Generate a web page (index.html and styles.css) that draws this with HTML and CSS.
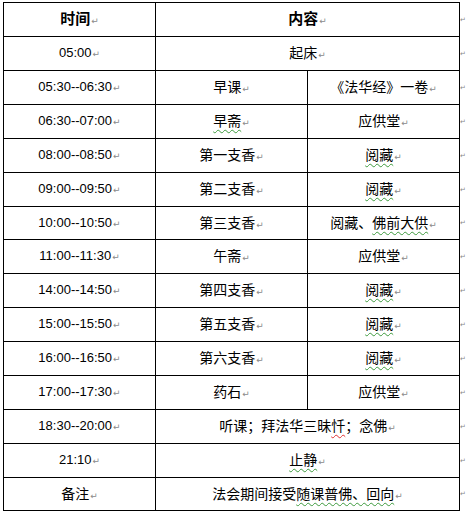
FILE: index.html
```html
<!DOCTYPE html>
<html lang="zh-CN">
<head>
<meta charset="utf-8">
<title>日程</title>
<link rel="stylesheet" href="styles.css">
</head>
<body>
<div class="page">
<table class="sched">
  <colgroup><col class="c1"><col class="c2"><col class="c3"><col class="ce"></colgroup>
  <tr><td class="hd">时间<span class="pm">↵</span></td><td class="hd" colspan="2">内容<span class="pm">↵</span></td><td class="eol">↵</td></tr>
  <tr><td class="t">05:00<span class="pm">↵</span></td><td colspan="2">起床<span class="pm">↵</span></td><td class="eol">↵</td></tr>
  <tr><td class="t">05:30--06:30<span class="pm">↵</span></td><td>早课<span class="pm">↵</span></td><td>《法华经》一卷<span class="pm">↵</span></td><td class="eol">↵</td></tr>
  <tr><td class="t">06:30--07:00<span class="pm">↵</span></td><td><span class="wg">早斋</span><span class="pm">↵</span></td><td>应供堂<span class="pm">↵</span></td><td class="eol">↵</td></tr>
  <tr><td class="t">08:00--08:50<span class="pm">↵</span></td><td>第一支香<span class="pm">↵</span></td><td><span class="wg">阅藏</span><span class="pm">↵</span></td><td class="eol">↵</td></tr>
  <tr><td class="t">09:00--09:50<span class="pm">↵</span></td><td>第二支香<span class="pm">↵</span></td><td><span class="wg">阅藏</span><span class="pm">↵</span></td><td class="eol">↵</td></tr>
  <tr class="short"><td class="t">10:00--10:50<span class="pm">↵</span></td><td>第三支香<span class="pm">↵</span></td><td>阅藏、<span class="wg">佛前大供</span><span class="pm">↵</span></td><td class="eol">↵</td></tr>
  <tr><td class="t">11:00--11:30<span class="pm">↵</span></td><td>午斋<span class="pm">↵</span></td><td>应供堂<span class="pm">↵</span></td><td class="eol">↵</td></tr>
  <tr><td class="t">14:00--14:50<span class="pm">↵</span></td><td>第四支香<span class="pm">↵</span></td><td><span class="wg">阅藏</span><span class="pm">↵</span></td><td class="eol">↵</td></tr>
  <tr><td class="t">15:00--15:50<span class="pm">↵</span></td><td>第五支香<span class="pm">↵</span></td><td><span class="wg">阅藏</span><span class="pm">↵</span></td><td class="eol">↵</td></tr>
  <tr><td class="t">16:00--16:50<span class="pm">↵</span></td><td>第六支香<span class="pm">↵</span></td><td><span class="wg">阅藏</span><span class="pm">↵</span></td><td class="eol">↵</td></tr>
  <tr><td class="t">17:00--17:30<span class="pm">↵</span></td><td>药石<span class="pm">↵</span></td><td>应供堂<span class="pm">↵</span></td><td class="eol">↵</td></tr>
  <tr><td class="t">18:30--20:00<span class="pm">↵</span></td><td colspan="2">听课；拜法华三昧<span class="wr">忏</span>；念佛<span class="pm">↵</span></td><td class="eol">↵</td></tr>
  <tr><td class="t">21:10<span class="pm">↵</span></td><td colspan="2"><span class="wg">止静</span><span class="pm">↵</span></td><td class="eol">↵</td></tr>
  <tr class="short"><td>备注<span class="pm">↵</span></td><td colspan="2">法会期间接受<span class="wg">随课普佛、回向</span><span class="pm">↵</span></td><td class="eol">↵</td></tr>
</table>
</div>
</body>
</html>
```

FILE: styles.css
```css
html, body {
  margin: 0;
  padding: 0;
  background: #ffffff;
}
.page {
  padding: 2px 0 0 3px;
}
.sched {
  border-collapse: collapse;
  table-layout: fixed;
  width: 462px;
  font-family: "Noto Sans CJK SC", sans-serif;
  font-size: 14px;
  color: #000;
}
.c1, .c2, .c3 { width: 152px; }
.ce { width: 6px; }
.sched tr { height: 34px; }
.sched tr.short { height: 33px; }
.sched td {
  border: 1px solid #000;
  text-align: center;
  vertical-align: middle;
  padding: 0;
  line-height: 16px;
  white-space: nowrap;
}
.sched td.eol {
  border: none;
  text-align: left;
  padding: 0;
  color: #8a8a8a;
  font-family: "DejaVu Sans", sans-serif;
  font-size: 7px;
}
.hd { font-weight: bold; font-size: 15px; }
.t {
  font-family: "Liberation Sans", sans-serif;
  font-size: 13px;
  color: #000;
}
.pm {
  color: #8a8a8a;
  font-family: "DejaVu Sans", sans-serif;
  font-size: 9px;
  font-weight: normal;
  margin-left: 1px;
}
.wg {
  text-decoration: underline wavy #3d9a3d;
  text-decoration-thickness: 1px;
  text-underline-offset: 3px;
}
.wr {
  text-decoration: underline wavy #e03030;
  text-decoration-thickness: 1px;
  text-underline-offset: 3px;
}
```
